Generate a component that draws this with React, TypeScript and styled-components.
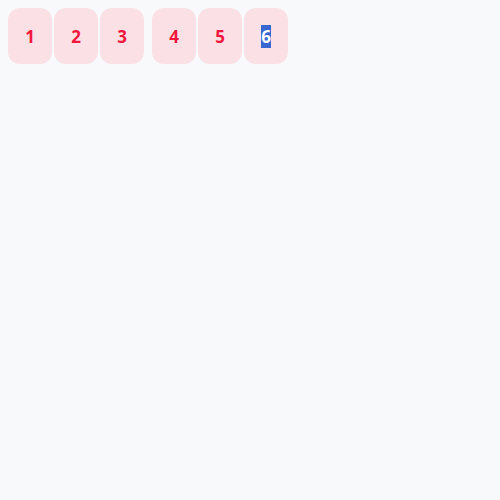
import React from "react";
import styled, { createGlobalStyle } from "styled-components";

const Global = createGlobalStyle`
  html, body { margin: 0; padding: 0; background: #f7f9fb; }
  body { font-family: "Noto Sans", "DejaVu Sans", sans-serif; }
`;

const Page = styled.div`
  padding: 8px;
  display: flex;
  gap: 8px;
`;

const Group = styled.div`
  display: flex;
  gap: 2px;
`;

const Cell = styled.div`
  width: 44px;
  height: 56px;
  border-radius: 12px;
  background: #fbe1e5;
  color: #f2163c;
  font-size: 17px;
  font-weight: 700;
  display: flex;
  align-items: center;
  justify-content: center;
`;

const Selected = styled.span<{ $active?: boolean }>`
  background: ${(p) => (p.$active ? "#3a66d0" : "transparent")};
  color: ${(p) => (p.$active ? "#ffffff" : "inherit")};
`;

const groups = [
  ["1", "2", "3"],
  ["4", "5", "6"],
];

export default function App() {
  return (
    <>
      <Global />
      <Page>
        {groups.map((g, gi) => (
          <Group key={gi}>
            {g.map((d) => (
              <Cell key={d}>
                <Selected $active={d === "6"}>{d}</Selected>
              </Cell>
            ))}
          </Group>
        ))}
      </Page>
    </>
  );
}
